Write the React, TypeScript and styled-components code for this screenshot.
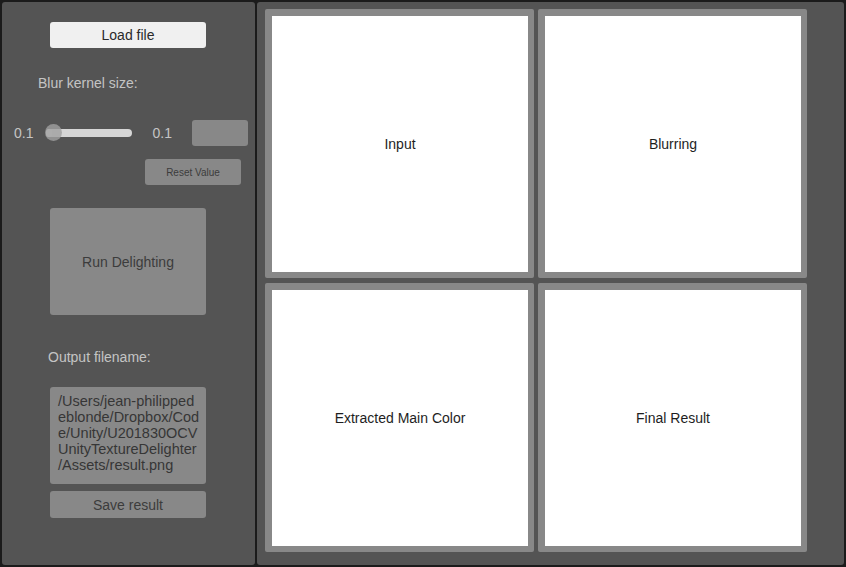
import React from "react";
import styled, { createGlobalStyle } from "styled-components";

const GlobalStyle = createGlobalStyle`
  html, body {
    margin: 0;
    padding: 0;
    background: #1b1b1b;
  }
  body {
    font-family: "Liberation Sans", Arial, sans-serif;
  }
`;

const Screen = styled.div`
  display: flex;
  gap: 2px;
  width: 846px;
  height: 567px;
  padding: 2px;
  box-sizing: border-box;
  background-color: #1b1b1b;
`;

const SidePanel = styled.div`
  width: 253px;
  flex-shrink: 0;
  display: flex;
  flex-direction: column;
  align-items: flex-start;
  background-color: #545454;
  border-radius: 3px;
`;

const ViewPanel = styled.div`
  flex: 1;
  background-color: #545454;
  border-radius: 3px;
  padding: 7px 0 0 8px;
  display: grid;
  grid-template-columns: 269px 269px;
  grid-template-rows: 269px 269px;
  column-gap: 4px;
  row-gap: 5px;
  align-content: start;
`;

const Button = styled.div<{ $light?: boolean; $left: number; $top: number; $w: number; $h: number; $size?: number }>`
  margin-left: ${(p) => p.$left}px;
  margin-top: ${(p) => p.$top}px;
  width: ${(p) => p.$w}px;
  height: ${(p) => p.$h}px;
  display: flex;
  align-items: center;
  justify-content: center;
  border-radius: 3px;
  background-color: ${(p) => (p.$light ? "#f0f0f0" : "#888888")};
  color: ${(p) => (p.$light ? "#2a2a2a" : "#3c3c3c")};
  font-size: ${(p) => p.$size ?? 14}px;
  flex-shrink: 0;
`;

const Label = styled.div<{ $left: number; $top: number }>`
  margin-left: ${(p) => p.$left}px;
  margin-top: ${(p) => p.$top}px;
  color: #c4c4c4;
  font-size: 14px;
  line-height: 16px;
`;

const SliderRow = styled.div`
  margin-top: 29px;
  height: 26px;
  display: flex;
  align-items: center;
`;

const ValueText = styled.span<{ $left: number }>`
  margin-left: ${(p) => p.$left}px;
  color: #c4c4c4;
  font-size: 14px;
`;

const Track = styled.div`
  position: relative;
  margin-left: 13px;
  width: 86px;
  height: 8px;
  border-radius: 4px;
  background-color: #d6d6d6;
`;

const Thumb = styled.div`
  position: absolute;
  left: -1px;
  top: -5px;
  width: 17px;
  height: 17px;
  border-radius: 50%;
  background-color: rgba(160, 160, 160, 0.8);
`;

const ThumbFill = styled.div`
  position: absolute;
  left: 0;
  top: 0;
  width: 6px;
  height: 8px;
  border-radius: 4px;
  background-color: #e2e2e2;
`;

const NumberBox = styled.div`
  margin-left: 20px;
  width: 56px;
  height: 26px;
  border-radius: 3px;
  background-color: #888888;
`;

const FileBox = styled.div`
  margin-left: 48px;
  margin-top: 22px;
  width: 156px;
  height: 97px;
  box-sizing: border-box;
  padding: 6px 0 0 8px;
  border-radius: 3px;
  background-color: #888888;
  color: #363636;
  font-size: 14.5px;
  line-height: 16px;
  white-space: nowrap;
`;

const Frame = styled.div`
  padding: 7px 6px 6px 7px;
  background-color: #888888;
  border-radius: 2px;
  box-sizing: border-box;
`;

const ImageArea = styled.div`
  width: 100%;
  height: 100%;
  background-color: #ffffff;
  display: flex;
  align-items: center;
  justify-content: center;
  color: #1e1e1e;
  font-size: 14px;
`;

const views = ["Input", "Blurring", "Extracted Main Color", "Final Result"];

const fileLines = [
  "/Users/jean-philipped",
  "eblonde/Dropbox/Cod",
  "e/Unity/U201830OCV",
  "UnityTextureDelighter",
  "/Assets/result.png",
];

export default function App() {
  return (
    <>
      <GlobalStyle />
      <Screen>
        <SidePanel>
          <Button $light $left={48} $top={20} $w={156} $h={26}>
            Load file
          </Button>
          <Label $left={36} $top={27}>
            Blur kernel size:
          </Label>
          <SliderRow>
            <ValueText $left={12}>0.1</ValueText>
            <Track>
              <ThumbFill />
              <Thumb />
            </Track>
            <ValueText $left={20}>0.1</ValueText>
            <NumberBox />
          </SliderRow>
          <Button $left={143} $top={13} $w={96} $h={26} $size={10}>
            Reset Value
          </Button>
          <Button $left={48} $top={23} $w={156} $h={107}>
            Run Delighting
          </Button>
          <Label $left={46} $top={34}>
            Output filename:
          </Label>
          <FileBox>
            {fileLines.map((line) => (
              <div key={line}>{line}</div>
            ))}
          </FileBox>
          <Button $left={48} $top={7} $w={156} $h={27}>
            Save result
          </Button>
        </SidePanel>
        <ViewPanel>
          {views.map((v) => (
            <Frame key={v}>
              <ImageArea>{v}</ImageArea>
            </Frame>
          ))}
        </ViewPanel>
      </Screen>
    </>
  );
}
